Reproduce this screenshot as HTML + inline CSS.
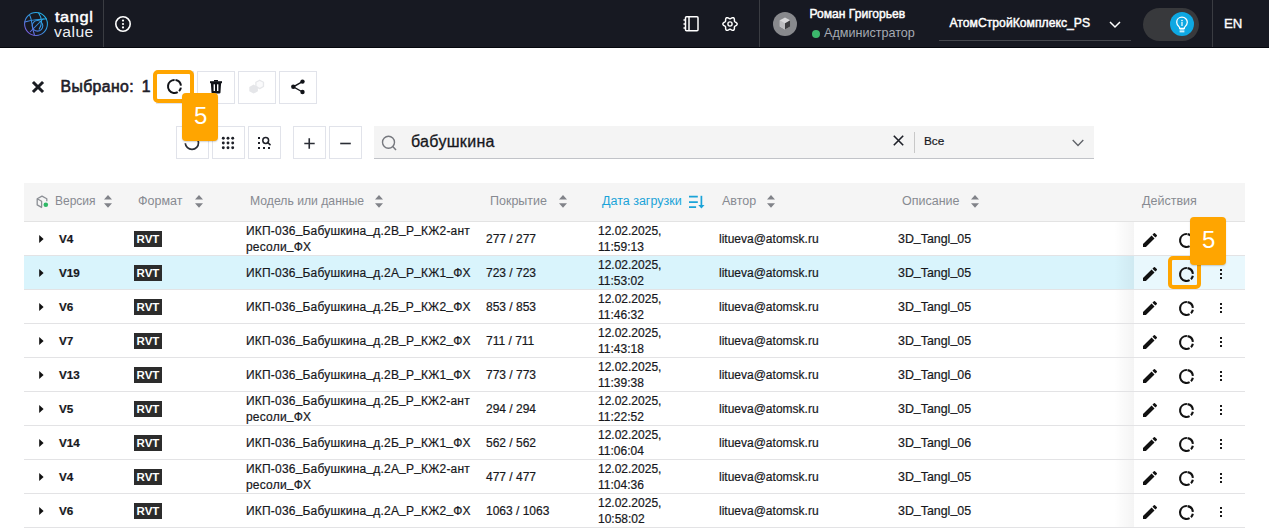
<!DOCTYPE html>
<html><head><meta charset="utf-8">
<style>
*{margin:0;padding:0;box-sizing:border-box}
html,body{width:1269px;height:529px;overflow:hidden;background:#fff;font-family:"Liberation Sans",sans-serif}
body{position:relative}
.a{position:absolute;white-space:nowrap}
svg{position:absolute;overflow:visible}
#hdr{position:absolute;left:0;top:0;width:1269px;height:48px;background:#171922;border-bottom:1px solid #05070d}
.vd{position:absolute;top:0;width:1px;height:47px;background:#3a3c42}
.btn{position:absolute;border:1px solid #e1e3ea;background:#fff}
.th{position:absolute;top:183px;left:24px;width:1221px;height:39px;background:#f5f5f5;border-bottom:1px solid #e3e3e3}
.hd{position:absolute;font-size:12.5px;color:#878a91;line-height:14px;top:194px;white-space:nowrap}
.row{position:absolute;left:24px;width:1221px;height:34px;border-bottom:1px solid #e3e3e5;background:#fff}
.row.sel{background:#d9f4fc}
.c{position:absolute;font-size:12px;color:#17181c;line-height:16px;white-space:nowrap}
.c.b{font-weight:bold;font-size:11.7px}
.c.d{font-size:12.4px}
.c.m{letter-spacing:0.2px}
.rvt{position:absolute;left:110px;top:9px;width:28px;height:16px;background:#2c2c2c;color:#fff;font-weight:bold;font-size:11.5px;line-height:16px;text-align:center}
.act{position:absolute;left:1110px;top:0;width:111px;height:33px;background:#fff}
.sel .act{background:#e9f8fd}
.shadow{position:absolute;left:1090px;top:0;width:20px;height:33px;background:linear-gradient(to right,rgba(0,0,0,0),rgba(0,0,0,0.045))}
.hl{position:absolute;border:4px solid #ffa500;border-radius:5px}
.badge{position:absolute;width:36px;height:48px;background:#ffa500;border-radius:4px;color:#fff;font-size:24px;line-height:45.5px;text-align:center;padding-left:1.6px;box-shadow:0 1px 1.5px rgba(0,0,0,0.18)}

.u{position:relative;top:-2px}
.c{-webkit-text-stroke:0.2px #17181c}

</style></head><body>
<div id="hdr">
  <div class="vd" style="left:103px"></div>
  <div class="vd" style="left:759px"></div>
  <div class="vd" style="left:1212px"></div>
  <svg style="left:24px;top:12px" width="24" height="24" viewBox="0 0 24 24">
    <defs><linearGradient id="lg" gradientUnits="userSpaceOnUse" x1="21" y1="3" x2="4" y2="22"><stop offset="0" stop-color="#1fb3ea"/><stop offset="0.55" stop-color="#3a8fe0"/><stop offset="1" stop-color="#7d5be0"/></linearGradient></defs>
    <g fill="none" stroke="url(#lg)" stroke-width="1.05">
      <circle cx="12" cy="12" r="11.4"/>
      <path d="M5.5 3C8.5 8 7.5 15 10.5 23"/>
      <path d="M14.5 0.8C18 6 18.5 12 15 17.5"/>
      <path d="M0.8 10C7 7.5 15 7.5 22.8 6.8"/>
      <circle cx="13.5" cy="13.8" r="5.3"/>
      <path d="M6 20L19.5 6.5"/>
    </g>
  </svg>
  <div class="a" style="left:54.5px;top:7.7px;font-size:14.5px;color:#fff;letter-spacing:0.5px;line-height:18px;-webkit-text-stroke:0.45px #fff;transform:scaleX(1.13);transform-origin:0 0">tangl</div>
  <div class="a" style="left:54px;top:22.7px;font-size:14px;color:#eef0f4;letter-spacing:0.4px;line-height:18px;transform:scaleX(1.12);transform-origin:0 0">value</div>
  <svg style="left:115px;top:16px" width="16" height="16" viewBox="0 0 16 16"><circle cx="8" cy="8" r="7.2" fill="none" stroke="#fff" stroke-width="1.6"/><circle cx="8" cy="4.6" r="1.1" fill="#fff"/><circle cx="8" cy="8" r="1.1" fill="#fff"/><circle cx="8" cy="11.4" r="1.1" fill="#fff"/></svg>
  <svg style="left:683px;top:16px" width="16" height="16" viewBox="0 0 16 16"><g fill="none" stroke="#fff" stroke-width="1.5"><rect x="2.5" y="0.8" width="12.5" height="14" rx="1"/><path d="M6 1V15"/><path d="M0.5 4H3 M0.5 8H3 M0.5 12H3"/></g></svg>
  <svg style="left:722px;top:16px" width="16" height="16" viewBox="0 0 16 16"><path fill="none" stroke="#fff" stroke-width="1.45" stroke-linejoin="round" d="M15.15 8.00 L15.05 8.49 L14.77 8.95 L14.35 9.35 L13.86 9.68 L13.38 9.96 L12.96 10.21 L12.65 10.47 L12.47 10.79 L12.39 11.19 L12.39 11.68 L12.39 12.24 L12.35 12.83 L12.21 13.39 L11.95 13.86 L11.58 14.19 L11.10 14.35 L10.56 14.34 L10.01 14.18 L9.48 13.92 L8.99 13.64 L8.57 13.40 L8.18 13.27 L7.82 13.27 L7.43 13.40 L7.01 13.64 L6.52 13.92 L5.99 14.18 L5.44 14.34 L4.90 14.35 L4.43 14.19 L4.05 13.86 L3.79 13.39 L3.65 12.83 L3.61 12.24 L3.61 11.68 L3.61 11.19 L3.53 10.79 L3.35 10.47 L3.04 10.21 L2.62 9.96 L2.14 9.68 L1.65 9.35 L1.23 8.95 L0.95 8.49 L0.85 8.00 L0.95 7.51 L1.23 7.05 L1.65 6.65 L2.14 6.32 L2.62 6.04 L3.04 5.79 L3.35 5.53 L3.53 5.21 L3.61 4.81 L3.61 4.32 L3.61 3.76 L3.65 3.17 L3.79 2.61 L4.05 2.14 L4.42 1.81 L4.90 1.65 L5.44 1.66 L5.99 1.82 L6.52 2.08 L7.01 2.36 L7.43 2.60 L7.82 2.73 L8.18 2.73 L8.57 2.60 L8.99 2.36 L9.48 2.08 L10.01 1.82 L10.56 1.66 L11.10 1.65 L11.58 1.81 L11.95 2.14 L12.21 2.61 L12.35 3.17 L12.39 3.76 L12.39 4.32 L12.39 4.81 L12.47 5.21 L12.65 5.53 L12.96 5.79 L13.38 6.04 L13.86 6.32 L14.35 6.65 L14.77 7.05 L15.05 7.51Z"/><circle cx="8" cy="8" r="2.1" fill="none" stroke="#fff" stroke-width="1.4"/></svg>
  <div style="position:absolute;left:773px;top:12px;width:24px;height:24px;border-radius:50%;background:#88898d"></div>
  <svg style="left:779px;top:17px" width="12" height="13" viewBox="0 0 12 13"><path d="M6 0.5L11.2 3.3V9.5L6 12.4L0.8 9.5V3.3Z" fill="#d9d9db"/><path d="M6 6.2L11.2 3.3V9.5L6 12.4Z" fill="#3d3d40"/><path d="M6 6.2V12.4L0.8 9.5V3.3Z" fill="#bdbdc0"/></svg>
  <div class="a" style="left:809.5px;top:6.5px;font-size:12.1px;color:#fff;line-height:14px;-webkit-text-stroke:0.45px #fff">Роман Григорьев</div>
  <div style="position:absolute;left:812px;top:29.5px;width:8px;height:8px;border-radius:50%;background:#3cb86c"></div>
  <div class="a" style="left:824px;top:25.5px;font-size:12.6px;color:#a6abb3;line-height:14px">Администратор</div>
  <div class="a" style="left:949.5px;top:15.5px;font-size:12.2px;color:#fff;line-height:14px;-webkit-text-stroke:0.45px #fff">АтомСтройКомплекс_PS</div>
  <svg style="left:1109px;top:21px" width="12" height="7" viewBox="0 0 12 7"><path d="M1 1L6 6L11 1" fill="none" stroke="#fff" stroke-width="1.5"/></svg>
  <div style="position:absolute;left:939px;top:40px;width:192px;height:1px;background:#45474d"></div>
  <div style="position:absolute;left:1143px;top:8px;width:56px;height:33px;border-radius:17px;background:#38393c"></div>
  <div style="position:absolute;left:1170px;top:12px;width:24px;height:24px;border-radius:50%;background:#0ea8e2"></div>
  <svg style="left:1175px;top:15.7px" width="14" height="18" viewBox="0 0 14 18"><path d="M7 1.2C3.9 1.2 1.7 3.5 1.7 6.3c0 2 1.2 3.3 2.2 4.3.5.5.8 1.1.8 1.7h4.6c0-.6.3-1.2.8-1.7 1-1 2.2-2.3 2.2-4.3 0-2.8-2.2-5.1-5.3-5.1z" fill="none" stroke="#fff" stroke-width="1.3"/><rect x="4.6" y="13.4" width="4.8" height="1.1" fill="#fff"/><rect x="4.6" y="15.2" width="4.8" height="1.1" fill="#fff"/><circle cx="7" cy="4.6" r="0.8" fill="#fff"/><rect x="6.4" y="6" width="1.2" height="4" fill="#fff"/></svg>
  <div class="a" style="left:1224px;top:16.5px;font-size:13.2px;color:#fff;line-height:14px;-webkit-text-stroke:0.35px #fff">EN</div>
</div>

<svg style="left:32px;top:81px" width="12" height="12" viewBox="0 0 12 12"><path d="M2 2L10 10M10 2L2 10" stroke="#1a1c22" stroke-width="3" stroke-linecap="square"/></svg>
<div class="a" style="left:60.5px;top:77.5px;font-size:15.8px;color:#1e2028;line-height:18px;letter-spacing:0.38px;-webkit-text-stroke:0.6px #1e2028">Выбрано:</div><div class="a" style="left:141.8px;top:77.5px;font-size:15.8px;color:#1e2028;line-height:18px;-webkit-text-stroke:0.6px #1e2028">1</div>
<div class="btn" style="left:156px;top:71px;width:38px;height:33px"></div>
<div class="btn" style="left:197px;top:71px;width:38px;height:33px"></div>
<div class="btn" style="left:238px;top:71px;width:38px;height:33px"></div>
<div class="btn" style="left:279px;top:71px;width:38px;height:33px"></div>
<svg style="left:167px;top:79px" width="15" height="15" viewBox="0 0 15 15"><circle cx="7.5" cy="7.5" r="6.5" fill="none" stroke="#111318" stroke-width="2" stroke-dasharray="8.1 2 3.9 1.6 23.24 2" transform="rotate(-81.2 7.5 7.5)"/></svg>
<svg style="left:210px;top:80px" width="12" height="14" viewBox="0 0 12 14"><rect x="4" y="0" width="4" height="1.5" fill="#111318"/><rect x="0" y="1.2" width="12" height="2" fill="#111318"/><path d="M0.9 3H11.1L10.5 12.4Q10.4 13.5 9.3 13.5H2.7Q1.6 13.5 1.5 12.4Z" fill="#111318"/><rect x="3.6" y="4.3" width="1.4" height="6.7" fill="#fff"/><rect x="7" y="4.3" width="1.4" height="6.7" fill="#fff"/></svg>
<svg style="left:249px;top:79px" width="15" height="15" viewBox="0 0 15 15"><path d="M10.7 1.2L14.5 3.3V7.5L10.7 9.6L6.9 7.5V3.3Z" fill="#fafafb" stroke="#e6e7ea" stroke-width="1.3" stroke-linejoin="round"/><path d="M4.6 5.6L8.9 7.9V12.3L4.6 14.6L0.3 12.3V7.9Z" fill="#e5e6e9"/></svg>
<svg style="left:291px;top:79px" width="15" height="15" viewBox="0 0 15 15"><circle cx="11.5" cy="2.6" r="2.2" fill="#111318"/><circle cx="2.3" cy="7.8" r="2.2" fill="#111318"/><circle cx="11.5" cy="13" r="2.2" fill="#111318"/><path d="M11.5 2.6L2.3 7.8L11.5 13" fill="none" stroke="#111318" stroke-width="1.4"/></svg>

<div class="btn" style="left:176px;top:126px;width:33px;height:33px"></div>
<div class="btn" style="left:212px;top:126px;width:33px;height:33px"></div>
<div class="btn" style="left:248px;top:126px;width:33px;height:33px"></div>
<div class="btn" style="left:293px;top:126px;width:33px;height:33px"></div>
<div class="btn" style="left:329px;top:126px;width:33px;height:33px"></div>
<svg style="left:185px;top:136px" width="14" height="14" viewBox="0 0 14 14"><path d="M0.3 7.2A6.6 6.6 0 1 0 6.9 0.2" fill="none" stroke="#2a2d35" stroke-width="1.7"/></svg>
<svg style="left:222px;top:137px" width="12" height="12" viewBox="0 0 12 12"><g fill="#1e2028"><circle cx="1.3" cy="1.3" r="1.45"/><circle cx="6" cy="1.3" r="1.45"/><circle cx="10.7" cy="1.3" r="1.45"/><circle cx="1.3" cy="6" r="1.45"/><circle cx="6" cy="6" r="1.45"/><circle cx="10.7" cy="6" r="1.45"/><circle cx="1.3" cy="10.7" r="1.45"/><circle cx="6" cy="10.7" r="1.45"/><circle cx="10.7" cy="10.7" r="1.45"/></g></svg>
<svg style="left:258px;top:137px" width="13" height="12" viewBox="0 0 13 12"><g fill="#1e2028"><rect x="0" y="0" width="2" height="2"/><rect x="0" y="5" width="2" height="2"/><rect x="0" y="10" width="2" height="2"/><rect x="5" y="10" width="2" height="2"/><rect x="10" y="10" width="2" height="2"/></g><circle cx="7.7" cy="3.5" r="2.9" fill="none" stroke="#1e2028" stroke-width="1.5"/><path d="M9.7 5.5L12 7.7" stroke="#1e2028" stroke-width="1.7" stroke-linecap="round"/></svg>
<svg style="left:303.5px;top:137.5px" width="11" height="11" viewBox="0 0 11 11"><path d="M5.25 0.3V10.7M0.3 5.5H10.7" stroke="#2a2d35" stroke-width="1.6"/></svg>
<svg style="left:339.5px;top:137.5px" width="11" height="11" viewBox="0 0 11 11"><path d="M0.2 5.5H10.8" stroke="#2a2d35" stroke-width="1.6"/></svg>

<div style="position:absolute;left:374px;top:126px;width:720px;height:33px;background:#f4f4f4;border-bottom:1.5px solid #c1c3c8"></div>
<svg style="left:381px;top:135px" width="16" height="16" viewBox="0 0 16 16"><circle cx="7.5" cy="7.2" r="6" fill="none" stroke="#76787e" stroke-width="1.4"/><path d="M11.7 11.5L15 14.9" stroke="#76787e" stroke-width="1.5"/></svg>
<div class="a" style="left:411px;top:132.5px;font-size:16px;color:#16171c;line-height:18px;letter-spacing:0.3px;-webkit-text-stroke:0.3px #16171c">бабушкина</div>
<svg style="left:893.2px;top:135.1px" width="11" height="11" viewBox="0 0 11 11"><path d="M0.8 0.8L10.2 10.2M10.2 0.8L0.8 10.2" stroke="#1e2028" stroke-width="1.6"/></svg>
<div style="position:absolute;left:914px;top:132px;width:1px;height:21px;background:#c8c8c8"></div>
<div class="a" style="left:924px;top:134px;font-size:11.8px;color:#16171c;line-height:14px;-webkit-text-stroke:0.2px #16171c">Все</div>
<svg style="left:1072px;top:139px" width="12" height="8" viewBox="0 0 12 8"><path d="M0.7 1L6 6.5L11.3 1" fill="none" stroke="#5f6268" stroke-width="1.3"/></svg>

<div class="hl" style="left:153px;top:70px;width:41px;height:33px"></div>
<div class="badge" style="left:182px;top:92.5px">5</div>

<div class="th"></div><svg style="left:36px;top:195px" width="13" height="14" viewBox="0 0 13 14"><path d="M10.8 6.3V3.8L6 1.1L1.2 3.8V9.9L6 12.6 M1.2 3.8L5.6 6.3V12.4" fill="none" stroke="#8c8f95" stroke-width="1.3" stroke-linejoin="round"/><circle cx="9.8" cy="9.8" r="2.3" fill="#2fb866"/></svg><div class="hd" style="left:55px;font-size:12px">Версия</div><svg style="left:103.5px;top:195.2px" width="8" height="13" viewBox="0 0 8 13"><path d="M4 0L8 4.4H0Z M0 8.3H8L4 12.7Z" fill="#818389"/></svg><div class="hd" style="left:138px;font-size:12.5px">Формат</div><svg style="left:195.0px;top:195.2px" width="8" height="13" viewBox="0 0 8 13"><path d="M4 0L8 4.4H0Z M0 8.3H8L4 12.7Z" fill="#818389"/></svg><div class="hd" style="left:250px;font-size:12.2px">Модель или данные</div><svg style="left:374.5px;top:195.2px" width="8" height="13" viewBox="0 0 8 13"><path d="M4 0L8 4.4H0Z M0 8.3H8L4 12.7Z" fill="#818389"/></svg><div class="hd" style="left:490px;font-size:12.5px">Покрытие</div><svg style="left:559.0px;top:195.2px" width="8" height="13" viewBox="0 0 8 13"><path d="M4 0L8 4.4H0Z M0 8.3H8L4 12.7Z" fill="#818389"/></svg><div class="hd" style="left:722px;font-size:12.5px">Автор</div><svg style="left:766.5px;top:195.2px" width="8" height="13" viewBox="0 0 8 13"><path d="M4 0L8 4.4H0Z M0 8.3H8L4 12.7Z" fill="#818389"/></svg><div class="hd" style="left:902px;font-size:12.5px">Описание</div><svg style="left:971.0px;top:195.2px" width="8" height="13" viewBox="0 0 8 13"><path d="M4 0L8 4.4H0Z M0 8.3H8L4 12.7Z" fill="#818389"/></svg><div class="hd" style="left:602px;color:#1aa3d8">Дата загрузки</div><svg style="left:689px;top:195px" width="16" height="14" viewBox="0 0 16 14"><path d="M0 1.7H8.8 M0 7.1H8.8 M0 12.1H7.1" stroke="#1aa3d8" stroke-width="1.7"/><path d="M12.4 0.8V11" stroke="#1aa3d8" stroke-width="1.7"/><path d="M9.3 10.1L12.4 13.5L15.5 10.1Z" fill="#1aa3d8"/></svg><div class="hd" style="left:1142px">Действия</div><div class="row" style="top:222px"><div class="shadow"></div><div class="act"></div><svg style="left:15px;top:13px" width="5" height="8" viewBox="0 0 5 8"><path d="M0.2 0L4.6 4L0.2 8Z" fill="#111"/></svg><div class="c b" style="left:35px;top:9px">V4</div><div class="rvt">RVT</div><div class="c m" style="left:222px;top:1px">ИКП-036<span class="u">_</span>Бабушкина<span class="u">_</span>д.2В<span class="u">_</span>Р<span class="u">_</span>КЖ2-ант<br>ресоли<span class="u">_</span>ФХ</div><div class="c" style="left:462px;top:9px">277 / 277</div><div class="c" style="left:574px;top:1px">12.02.2025,<br>11:59:13</div><div class="c" style="left:695px;top:9px">litueva@atomsk.ru</div><div class="c d" style="left:874px;top:9px">3D<span class="u">_</span>Tangl<span class="u">_</span>05</div><svg style="left:1119px;top:11px" width="14" height="14" viewBox="3 3 18 18"><path d="M3 17.25V21h3.75L17.81 9.94l-3.75-3.75L3 17.25zM20.71 7.04a1 1 0 0 0 0-1.41l-2.34-2.34a1 1 0 0 0-1.41 0l-1.83 1.83 3.75 3.75 1.83-1.83z" fill="#111"/></svg><svg style="left:1154.5px;top:10.5px" width="15" height="15" viewBox="0 0 15 15"><circle cx="7.5" cy="7.5" r="6.45" fill="none" stroke="#111" stroke-width="2.1" stroke-dasharray="8.1 2 3.9 1.6 23.24 2" transform="rotate(-81.2 7.5 7.5)"/></svg><svg style="left:1196px;top:13px" width="2" height="10" viewBox="0 0 2 10"><rect x="0" y="0" width="2" height="2" fill="#1a1a1a"/><rect x="0" y="4" width="2" height="2" fill="#1a1a1a"/><rect x="0" y="8" width="2" height="2" fill="#1a1a1a"/></svg></div><div class="row sel" style="top:256px"><div class="shadow"></div><div class="act"></div><svg style="left:15px;top:13px" width="5" height="8" viewBox="0 0 5 8"><path d="M0.2 0L4.6 4L0.2 8Z" fill="#111"/></svg><div class="c b" style="left:35px;top:9px">V19</div><div class="rvt">RVT</div><div class="c m" style="left:222px;top:9px">ИКП-036<span class="u">_</span>Бабушкина<span class="u">_</span>д.2А<span class="u">_</span>Р<span class="u">_</span>КЖ1<span class="u">_</span>ФХ</div><div class="c" style="left:462px;top:9px">723 / 723</div><div class="c" style="left:574px;top:1px">12.02.2025,<br>11:53:02</div><div class="c" style="left:695px;top:9px">litueva@atomsk.ru</div><div class="c d" style="left:874px;top:9px">3D<span class="u">_</span>Tangl<span class="u">_</span>05</div><svg style="left:1119px;top:11px" width="14" height="14" viewBox="3 3 18 18"><path d="M3 17.25V21h3.75L17.81 9.94l-3.75-3.75L3 17.25zM20.71 7.04a1 1 0 0 0 0-1.41l-2.34-2.34a1 1 0 0 0-1.41 0l-1.83 1.83 3.75 3.75 1.83-1.83z" fill="#111"/></svg><svg style="left:1154.5px;top:10.5px" width="15" height="15" viewBox="0 0 15 15"><circle cx="7.5" cy="7.5" r="6.45" fill="none" stroke="#111" stroke-width="2.1" stroke-dasharray="8.1 2 3.9 1.6 23.24 2" transform="rotate(-81.2 7.5 7.5)"/></svg><svg style="left:1196px;top:13px" width="2" height="10" viewBox="0 0 2 10"><rect x="0" y="0" width="2" height="2" fill="#1a1a1a"/><rect x="0" y="4" width="2" height="2" fill="#1a1a1a"/><rect x="0" y="8" width="2" height="2" fill="#1a1a1a"/></svg></div><div class="row" style="top:290px"><div class="shadow"></div><div class="act"></div><svg style="left:15px;top:13px" width="5" height="8" viewBox="0 0 5 8"><path d="M0.2 0L4.6 4L0.2 8Z" fill="#111"/></svg><div class="c b" style="left:35px;top:9px">V6</div><div class="rvt">RVT</div><div class="c m" style="left:222px;top:9px">ИКП-036<span class="u">_</span>Бабушкина<span class="u">_</span>д.2Б<span class="u">_</span>Р<span class="u">_</span>КЖ2<span class="u">_</span>ФХ</div><div class="c" style="left:462px;top:9px">853 / 853</div><div class="c" style="left:574px;top:1px">12.02.2025,<br>11:46:32</div><div class="c" style="left:695px;top:9px">litueva@atomsk.ru</div><div class="c d" style="left:874px;top:9px">3D<span class="u">_</span>Tangl<span class="u">_</span>05</div><svg style="left:1119px;top:11px" width="14" height="14" viewBox="3 3 18 18"><path d="M3 17.25V21h3.75L17.81 9.94l-3.75-3.75L3 17.25zM20.71 7.04a1 1 0 0 0 0-1.41l-2.34-2.34a1 1 0 0 0-1.41 0l-1.83 1.83 3.75 3.75 1.83-1.83z" fill="#111"/></svg><svg style="left:1154.5px;top:10.5px" width="15" height="15" viewBox="0 0 15 15"><circle cx="7.5" cy="7.5" r="6.45" fill="none" stroke="#111" stroke-width="2.1" stroke-dasharray="8.1 2 3.9 1.6 23.24 2" transform="rotate(-81.2 7.5 7.5)"/></svg><svg style="left:1196px;top:13px" width="2" height="10" viewBox="0 0 2 10"><rect x="0" y="0" width="2" height="2" fill="#1a1a1a"/><rect x="0" y="4" width="2" height="2" fill="#1a1a1a"/><rect x="0" y="8" width="2" height="2" fill="#1a1a1a"/></svg></div><div class="row" style="top:324px"><div class="shadow"></div><div class="act"></div><svg style="left:15px;top:13px" width="5" height="8" viewBox="0 0 5 8"><path d="M0.2 0L4.6 4L0.2 8Z" fill="#111"/></svg><div class="c b" style="left:35px;top:9px">V7</div><div class="rvt">RVT</div><div class="c m" style="left:222px;top:9px">ИКП-036<span class="u">_</span>Бабушкина<span class="u">_</span>д.2В<span class="u">_</span>Р<span class="u">_</span>КЖ2<span class="u">_</span>ФХ</div><div class="c" style="left:462px;top:9px">711 / 711</div><div class="c" style="left:574px;top:1px">12.02.2025,<br>11:43:18</div><div class="c" style="left:695px;top:9px">litueva@atomsk.ru</div><div class="c d" style="left:874px;top:9px">3D<span class="u">_</span>Tangl<span class="u">_</span>05</div><svg style="left:1119px;top:11px" width="14" height="14" viewBox="3 3 18 18"><path d="M3 17.25V21h3.75L17.81 9.94l-3.75-3.75L3 17.25zM20.71 7.04a1 1 0 0 0 0-1.41l-2.34-2.34a1 1 0 0 0-1.41 0l-1.83 1.83 3.75 3.75 1.83-1.83z" fill="#111"/></svg><svg style="left:1154.5px;top:10.5px" width="15" height="15" viewBox="0 0 15 15"><circle cx="7.5" cy="7.5" r="6.45" fill="none" stroke="#111" stroke-width="2.1" stroke-dasharray="8.1 2 3.9 1.6 23.24 2" transform="rotate(-81.2 7.5 7.5)"/></svg><svg style="left:1196px;top:13px" width="2" height="10" viewBox="0 0 2 10"><rect x="0" y="0" width="2" height="2" fill="#1a1a1a"/><rect x="0" y="4" width="2" height="2" fill="#1a1a1a"/><rect x="0" y="8" width="2" height="2" fill="#1a1a1a"/></svg></div><div class="row" style="top:358px"><div class="shadow"></div><div class="act"></div><svg style="left:15px;top:13px" width="5" height="8" viewBox="0 0 5 8"><path d="M0.2 0L4.6 4L0.2 8Z" fill="#111"/></svg><div class="c b" style="left:35px;top:9px">V13</div><div class="rvt">RVT</div><div class="c m" style="left:222px;top:9px">ИКП-036<span class="u">_</span>Бабушкина<span class="u">_</span>д.2В<span class="u">_</span>Р<span class="u">_</span>КЖ1<span class="u">_</span>ФХ</div><div class="c" style="left:462px;top:9px">773 / 773</div><div class="c" style="left:574px;top:1px">12.02.2025,<br>11:39:38</div><div class="c" style="left:695px;top:9px">litueva@atomsk.ru</div><div class="c d" style="left:874px;top:9px">3D<span class="u">_</span>Tangl<span class="u">_</span>06</div><svg style="left:1119px;top:11px" width="14" height="14" viewBox="3 3 18 18"><path d="M3 17.25V21h3.75L17.81 9.94l-3.75-3.75L3 17.25zM20.71 7.04a1 1 0 0 0 0-1.41l-2.34-2.34a1 1 0 0 0-1.41 0l-1.83 1.83 3.75 3.75 1.83-1.83z" fill="#111"/></svg><svg style="left:1154.5px;top:10.5px" width="15" height="15" viewBox="0 0 15 15"><circle cx="7.5" cy="7.5" r="6.45" fill="none" stroke="#111" stroke-width="2.1" stroke-dasharray="8.1 2 3.9 1.6 23.24 2" transform="rotate(-81.2 7.5 7.5)"/></svg><svg style="left:1196px;top:13px" width="2" height="10" viewBox="0 0 2 10"><rect x="0" y="0" width="2" height="2" fill="#1a1a1a"/><rect x="0" y="4" width="2" height="2" fill="#1a1a1a"/><rect x="0" y="8" width="2" height="2" fill="#1a1a1a"/></svg></div><div class="row" style="top:392px"><div class="shadow"></div><div class="act"></div><svg style="left:15px;top:13px" width="5" height="8" viewBox="0 0 5 8"><path d="M0.2 0L4.6 4L0.2 8Z" fill="#111"/></svg><div class="c b" style="left:35px;top:9px">V5</div><div class="rvt">RVT</div><div class="c m" style="left:222px;top:1px">ИКП-036<span class="u">_</span>Бабушкина<span class="u">_</span>д.2Б<span class="u">_</span>Р<span class="u">_</span>КЖ2-ант<br>ресоли<span class="u">_</span>ФХ</div><div class="c" style="left:462px;top:9px">294 / 294</div><div class="c" style="left:574px;top:1px">12.02.2025,<br>11:22:52</div><div class="c" style="left:695px;top:9px">litueva@atomsk.ru</div><div class="c d" style="left:874px;top:9px">3D<span class="u">_</span>Tangl<span class="u">_</span>05</div><svg style="left:1119px;top:11px" width="14" height="14" viewBox="3 3 18 18"><path d="M3 17.25V21h3.75L17.81 9.94l-3.75-3.75L3 17.25zM20.71 7.04a1 1 0 0 0 0-1.41l-2.34-2.34a1 1 0 0 0-1.41 0l-1.83 1.83 3.75 3.75 1.83-1.83z" fill="#111"/></svg><svg style="left:1154.5px;top:10.5px" width="15" height="15" viewBox="0 0 15 15"><circle cx="7.5" cy="7.5" r="6.45" fill="none" stroke="#111" stroke-width="2.1" stroke-dasharray="8.1 2 3.9 1.6 23.24 2" transform="rotate(-81.2 7.5 7.5)"/></svg><svg style="left:1196px;top:13px" width="2" height="10" viewBox="0 0 2 10"><rect x="0" y="0" width="2" height="2" fill="#1a1a1a"/><rect x="0" y="4" width="2" height="2" fill="#1a1a1a"/><rect x="0" y="8" width="2" height="2" fill="#1a1a1a"/></svg></div><div class="row" style="top:426px"><div class="shadow"></div><div class="act"></div><svg style="left:15px;top:13px" width="5" height="8" viewBox="0 0 5 8"><path d="M0.2 0L4.6 4L0.2 8Z" fill="#111"/></svg><div class="c b" style="left:35px;top:9px">V14</div><div class="rvt">RVT</div><div class="c m" style="left:222px;top:9px">ИКП-036<span class="u">_</span>Бабушкина<span class="u">_</span>д.2Б<span class="u">_</span>Р<span class="u">_</span>КЖ1<span class="u">_</span>ФХ</div><div class="c" style="left:462px;top:9px">562 / 562</div><div class="c" style="left:574px;top:1px">12.02.2025,<br>11:06:04</div><div class="c" style="left:695px;top:9px">litueva@atomsk.ru</div><div class="c d" style="left:874px;top:9px">3D<span class="u">_</span>Tangl<span class="u">_</span>06</div><svg style="left:1119px;top:11px" width="14" height="14" viewBox="3 3 18 18"><path d="M3 17.25V21h3.75L17.81 9.94l-3.75-3.75L3 17.25zM20.71 7.04a1 1 0 0 0 0-1.41l-2.34-2.34a1 1 0 0 0-1.41 0l-1.83 1.83 3.75 3.75 1.83-1.83z" fill="#111"/></svg><svg style="left:1154.5px;top:10.5px" width="15" height="15" viewBox="0 0 15 15"><circle cx="7.5" cy="7.5" r="6.45" fill="none" stroke="#111" stroke-width="2.1" stroke-dasharray="8.1 2 3.9 1.6 23.24 2" transform="rotate(-81.2 7.5 7.5)"/></svg><svg style="left:1196px;top:13px" width="2" height="10" viewBox="0 0 2 10"><rect x="0" y="0" width="2" height="2" fill="#1a1a1a"/><rect x="0" y="4" width="2" height="2" fill="#1a1a1a"/><rect x="0" y="8" width="2" height="2" fill="#1a1a1a"/></svg></div><div class="row" style="top:460px"><div class="shadow"></div><div class="act"></div><svg style="left:15px;top:13px" width="5" height="8" viewBox="0 0 5 8"><path d="M0.2 0L4.6 4L0.2 8Z" fill="#111"/></svg><div class="c b" style="left:35px;top:9px">V4</div><div class="rvt">RVT</div><div class="c m" style="left:222px;top:1px">ИКП-036<span class="u">_</span>Бабушкина<span class="u">_</span>д.2А<span class="u">_</span>Р<span class="u">_</span>КЖ2-ант<br>ресоли<span class="u">_</span>ФХ</div><div class="c" style="left:462px;top:9px">477 / 477</div><div class="c" style="left:574px;top:1px">12.02.2025,<br>11:04:36</div><div class="c" style="left:695px;top:9px">litueva@atomsk.ru</div><div class="c d" style="left:874px;top:9px">3D<span class="u">_</span>Tangl<span class="u">_</span>05</div><svg style="left:1119px;top:11px" width="14" height="14" viewBox="3 3 18 18"><path d="M3 17.25V21h3.75L17.81 9.94l-3.75-3.75L3 17.25zM20.71 7.04a1 1 0 0 0 0-1.41l-2.34-2.34a1 1 0 0 0-1.41 0l-1.83 1.83 3.75 3.75 1.83-1.83z" fill="#111"/></svg><svg style="left:1154.5px;top:10.5px" width="15" height="15" viewBox="0 0 15 15"><circle cx="7.5" cy="7.5" r="6.45" fill="none" stroke="#111" stroke-width="2.1" stroke-dasharray="8.1 2 3.9 1.6 23.24 2" transform="rotate(-81.2 7.5 7.5)"/></svg><svg style="left:1196px;top:13px" width="2" height="10" viewBox="0 0 2 10"><rect x="0" y="0" width="2" height="2" fill="#1a1a1a"/><rect x="0" y="4" width="2" height="2" fill="#1a1a1a"/><rect x="0" y="8" width="2" height="2" fill="#1a1a1a"/></svg></div><div class="row" style="top:494px"><div class="shadow"></div><div class="act"></div><svg style="left:15px;top:13px" width="5" height="8" viewBox="0 0 5 8"><path d="M0.2 0L4.6 4L0.2 8Z" fill="#111"/></svg><div class="c b" style="left:35px;top:9px">V6</div><div class="rvt">RVT</div><div class="c m" style="left:222px;top:9px">ИКП-036<span class="u">_</span>Бабушкина<span class="u">_</span>д.2А<span class="u">_</span>Р<span class="u">_</span>КЖ2<span class="u">_</span>ФХ</div><div class="c" style="left:462px;top:9px">1063 / 1063</div><div class="c" style="left:574px;top:1px">12.02.2025,<br>10:58:02</div><div class="c" style="left:695px;top:9px">litueva@atomsk.ru</div><div class="c d" style="left:874px;top:9px">3D<span class="u">_</span>Tangl<span class="u">_</span>05</div><svg style="left:1119px;top:11px" width="14" height="14" viewBox="3 3 18 18"><path d="M3 17.25V21h3.75L17.81 9.94l-3.75-3.75L3 17.25zM20.71 7.04a1 1 0 0 0 0-1.41l-2.34-2.34a1 1 0 0 0-1.41 0l-1.83 1.83 3.75 3.75 1.83-1.83z" fill="#111"/></svg><svg style="left:1154.5px;top:10.5px" width="15" height="15" viewBox="0 0 15 15"><circle cx="7.5" cy="7.5" r="6.45" fill="none" stroke="#111" stroke-width="2.1" stroke-dasharray="8.1 2 3.9 1.6 23.24 2" transform="rotate(-81.2 7.5 7.5)"/></svg><svg style="left:1196px;top:13px" width="2" height="10" viewBox="0 0 2 10"><rect x="0" y="0" width="2" height="2" fill="#1a1a1a"/><rect x="0" y="4" width="2" height="2" fill="#1a1a1a"/><rect x="0" y="8" width="2" height="2" fill="#1a1a1a"/></svg></div>
<div class="hl" style="left:1168px;top:256.3px;width:33px;height:33px"></div><div class="badge" style="left:1190px;top:216.5px">5</div>
</body></html>
